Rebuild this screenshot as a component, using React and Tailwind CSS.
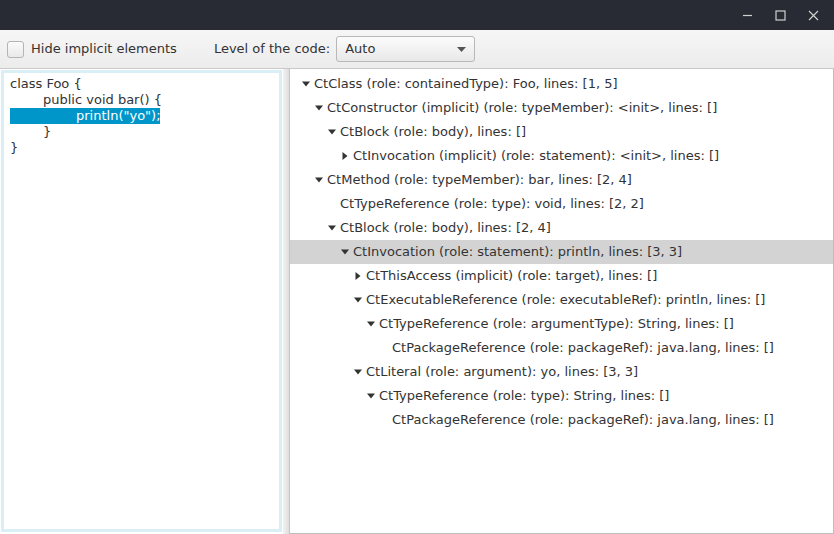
import React from 'react';

const rows = [
    { level: 0, toggle: 'open', text: 'CtClass (role: containedType): Foo, lines: [1, 5]' },
    { level: 1, toggle: 'open', text: 'CtConstructor (implicit) (role: typeMember): <init>, lines: []' },
    { level: 2, toggle: 'open', text: 'CtBlock (role: body), lines: []' },
    { level: 3, toggle: 'closed', text: 'CtInvocation (implicit) (role: statement): <init>, lines: []' },
    { level: 1, toggle: 'open', text: 'CtMethod (role: typeMember): bar, lines: [2, 4]' },
    { level: 2, toggle: null, text: 'CtTypeReference (role: type): void, lines: [2, 2]' },
    { level: 2, toggle: 'open', text: 'CtBlock (role: body), lines: [2, 4]' },
    { level: 3, toggle: 'open', text: 'CtInvocation (role: statement): println, lines: [3, 3]', selected: true },
    { level: 4, toggle: 'closed', text: 'CtThisAccess (implicit) (role: target), lines: []' },
    { level: 4, toggle: 'open', text: 'CtExecutableReference (role: executableRef): println, lines: []' },
    { level: 5, toggle: 'open', text: 'CtTypeReference (role: argumentType): String, lines: []' },
    { level: 6, toggle: null, text: 'CtPackageReference (role: packageRef): java.lang, lines: []' },
    { level: 4, toggle: 'open', text: 'CtLiteral (role: argument): yo, lines: [3, 3]' },
    { level: 5, toggle: 'open', text: 'CtTypeReference (role: type): String, lines: []' },
    { level: 6, toggle: null, text: 'CtPackageReference (role: packageRef): java.lang, lines: []' },
];

// indent per level, ~13px
const indent = [
    'pl-[11px]',
    'pl-[24px]',
    'pl-[37px]',
    'pl-[50px]',
    'pl-[63px]',
    'pl-[76px]',
    'pl-[89px]',
];

function Toggle({ type }) {
    if (type === 'open') {
        return (
            <svg width="8" height="6" viewBox="0 0 8 6" className="ml-[1px]">
                <path d="M0 0.5 L8 0.5 L4 5.5 Z" fill="#333" />
            </svg>
        );
    }
    if (type === 'closed') {
        return (
            <svg width="6" height="8" viewBox="0 0 6 8" className="ml-[2px]">
                <path d="M0.5 0 L5.5 4 L0.5 8 Z" fill="#333" />
            </svg>
        );
    }
    return null;
}

function TitleBar() {
    return (
        <div className="h-[30px] bg-[#282b34] flex items-center justify-end pr-[15px] gap-[22px]">
            <svg width="11" height="11" viewBox="0 0 11 11">
                <line x1="1" y1="5.5" x2="10" y2="5.5" stroke="#d0d0d0" strokeWidth="1.2" />
            </svg>
            <svg width="11" height="11" viewBox="0 0 11 11">
                <rect x="1" y="1" width="9" height="9" fill="none" stroke="#d0d0d0" strokeWidth="1.2" />
            </svg>
            <svg width="11" height="11" viewBox="0 0 11 11">
                <path d="M1 1 L10 10 M10 1 L1 10" stroke="#d0d0d0" strokeWidth="1.2" />
            </svg>
        </div>
    );
}

function Toolbar() {
    return (
        <div className="h-[39px] bg-gradient-to-b from-[#f6f6f6] to-[#ececec] border-b border-[#c8c8c8] flex items-center pl-[7px] text-[13px] text-[#333]">
            <div className="w-[17px] h-[17px] rounded-[3px] border border-[#b4b4b4] bg-gradient-to-b from-[#fbfbfb] to-[#e9e9e9]" />
            <span className="ml-[7px]">Hide implicit elements</span>
            <span className="ml-[37px]">Level of the code:</span>
            <div className="ml-[6px] w-[139px] h-[26px] rounded-[3px] border border-[#b8b8b8] bg-gradient-to-b from-[#fcfcfc] to-[#e8e8e8] flex items-center justify-between pl-[8px] pr-[8px]">
                <span>Auto</span>
                <svg width="9" height="5" viewBox="0 0 9 5">
                    <path d="M0 0 L9 0 L4.5 5 Z" fill="#555" />
                </svg>
            </div>
        </div>
    );
}

function CodePane() {
    return (
        <div className="w-[283px] bg-white p-[1px] pb-[2px]">
            <div className="h-full border-[3px] border-[#d9eef5] px-[6px] pt-[3px] text-[13px] leading-[16px] text-[#333]">
                <div>class Foo {'{'}</div>
                <div className="pl-[33px]">public void bar() {'{'}</div>
                <div className="w-[150px] bg-[#0096c9] text-white pl-[66px]">println("yo");</div>
                <div className="pl-[33px]">{'}'}</div>
                <div>{'}'}</div>
            </div>
        </div>
    );
}

function TreePane() {
    return (
        <div className="flex-1 bg-white border-r border-b border-[#bdbdbd] pt-[3px] text-[13px]">
            {rows.map((row, i) => (
                <div
                    key={i}
                    className={`h-[24px] flex items-center ${indent[row.level]} ${row.selected ? 'bg-[#d3d3d3]' : ''}`}
                >
                    <div className="w-[13px] flex items-center">
                        <Toggle type={row.toggle} />
                    </div>
                    <span className="whitespace-pre">{row.text}</span>
                </div>
            ))}
        </div>
    );
}

export default function App() {
    return (
        <div className="w-[834px] h-[534px] flex flex-col bg-[#f0f0f0] font-['DejaVu_Sans',sans-serif] text-[13px] text-[#333] overflow-hidden">
            <TitleBar />
            <Toolbar />
            <div className="flex-1 flex min-h-0">
                <CodePane />
                <div className="w-[7px] bg-gradient-to-r from-[#f2f2f2] to-[#dedede] border-r border-[#c4c4c4]" />
                <TreePane />
            </div>
        </div>
    );
}
